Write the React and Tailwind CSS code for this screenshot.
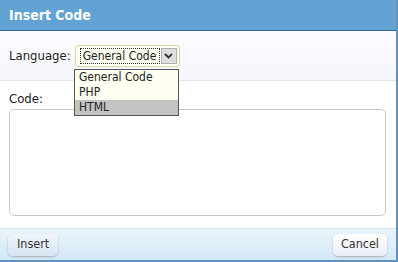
import React from 'react';

const font = { fontFamily: '"DejaVu Sans Condensed", "Liberation Sans", sans-serif' };

function App() {
  return (
    <div className="relative w-[398px] h-[262px] bg-white border-r-2 border-b-2 border-[#5f93bb] flex flex-col text-[13px] text-[#222] font-stretch-condensed" style={font}>
      <div className="h-[31px] shrink-0 bg-[#62a3d3] border-b border-[#2f6688] px-[9px] flex items-center">
        <span className="text-white font-bold text-[14px]">Insert Code</span>
      </div>

      <div className="h-[50px] shrink-0 bg-gradient-to-b from-[#fdfbff] to-[#f5f7fd] border-b border-[#dbe7f2] flex items-center px-[9px] gap-[4px]">
        <span>Language:</span>
        <div className="w-[105px] h-[22px] rounded-[3px] border border-[#d8d3a8] bg-[#fffff2] flex items-center pl-[4px] pr-[2px] gap-[1px]">
          <div className="flex-1 h-[16px] border border-dotted border-[#333] flex items-center pl-[2px] text-[12px] leading-none whitespace-nowrap overflow-hidden">
            General Code
          </div>
          <div className="w-[16px] h-[16px] bg-[#dedede] border border-[#b0b0b0] flex items-center justify-center">
            <svg width="9" height="6" viewBox="0 0 9 6">
              <path d="M1 1l3.5 3.5L8 1" stroke="#333" strokeWidth="1.8" fill="none" />
            </svg>
          </div>
        </div>
      </div>

      <div className="flex-1 flex flex-col px-[9px] pt-[11px] pb-[12px] gap-[3px]">
        <span className="leading-[14px]">Code:</span>
        <div className="flex-1 mr-[1px] rounded-[5px] border border-[#c9c9c9] bg-white" />
      </div>

      <div className="h-[32px] shrink-0 bg-gradient-to-b from-[#eaf4fb] to-[#d3e8f6] border-t border-[#d5e7f4] flex items-center justify-between px-[8px]">
        <button className="h-[22px] px-[9px] rounded-[5px] bg-gradient-to-b from-[#f2f6fb] to-[#d6e3f1] shadow-[0_1px_2px_rgba(0,0,0,0.25)] text-[12.5px] text-[#333]">
          Insert
        </button>
        <button className="h-[22px] px-[8px] mr-[1px] rounded-[5px] bg-gradient-to-b from-[#ffffff] to-[#eaeef5] shadow-[0_1px_2px_rgba(0,0,0,0.25)] text-[12.5px] text-[#333]">
          Cancel
        </button>
      </div>

      <div className="absolute left-[74px] top-[69px] w-[105px] h-[47px] bg-[#fffff2] border border-[#555] flex flex-col text-[12px] leading-[15px]">
        <div className="px-[4px]">General Code</div>
        <div className="px-[4px]">PHP</div>
        <div className="px-[4px] bg-[#c3c3c3]">HTML</div>
      </div>
    </div>
  );
}

export default App;
